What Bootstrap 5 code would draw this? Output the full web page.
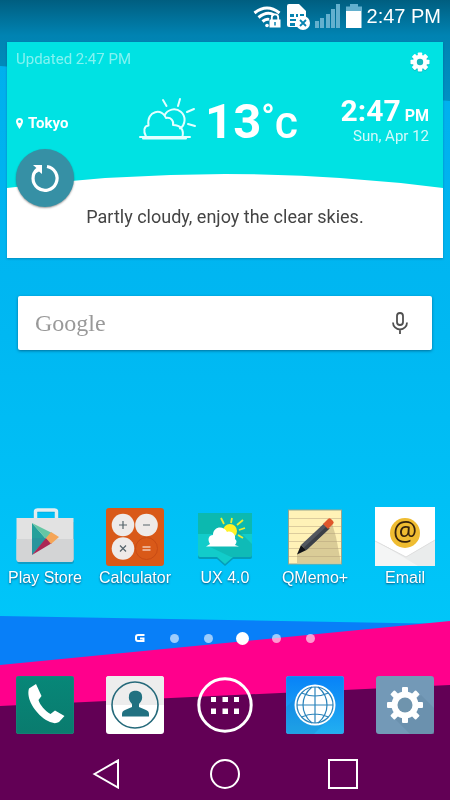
<!DOCTYPE html>
<html lang="en">
<head>
<meta charset="utf-8">
<meta name="viewport" content="width=device-width, initial-scale=1">
<title>Home screen</title>
<link href="https://cdn.jsdelivr.net/npm/bootstrap@5.3.0/dist/css/bootstrap.min.css" rel="stylesheet">
<style>
body{font-family:"Liberation Sans",Arial,sans-serif;color:#fff;background:#00b6f2}
svg{display:block;flex:none}
button{color:inherit;background:none;border:0;padding:0}
.wallpaper{position:fixed;inset:0;width:100%;height:100%;z-index:-1}
.statusbar{height:32px;padding:0 9px;gap:5px;font-size:20px;line-height:32px}
.weather{margin:10px 7px 0;font-family:Roboto,sans-serif;background:#fff;color:#fff;box-shadow:0 1px 2px rgba(0,60,90,.35)}
.weather-sky{background:#00e2e3}
.weather-head{padding:8px 13px 0 9px;height:42px;font-size:15px;line-height:18px;color:#83f2f1}
.weather-now{padding:0 14px 0 9px;height:72px}
.side{flex:1 1 0;min-width:0}
.city{font-size:15px;line-height:16px;font-weight:700;gap:5px;padding-top:6px}
.temp{font-size:49px;line-height:56px;font-weight:700}
.temp-deg,.temp-unit{font-size:35px;line-height:1}
.temp-deg{vertical-align:9px}
.clock{font-size:30px;line-height:32px;font-weight:700}
.clock-half{font-size:16px;line-height:1}
.today{font-size:15px;line-height:18px;color:#d3fafa}
.weather-text{height:70px;padding-top:16px;font-size:18px;line-height:26px;color:#444}
.refresh{position:absolute;left:9px;top:107px;width:58px;height:58px;border-radius:50%;background:#3690a5;box-shadow:0 1px 2px rgba(0,0,0,.4)}
.search{margin:38px 18px 0;height:54px;padding:0 19px 0 17px;background:#fff;border-radius:2px;box-shadow:0 1px 3px rgba(0,50,80,.55)}
.search input{border:0;outline:0;background:none;font-family:"Liberation Serif",serif;font-size:24px;color:#555}
.search input::placeholder{color:#999;opacity:1}
.apps{padding-top:24px;margin-bottom:40px}
.app{width:100%;font-size:16px;line-height:24px;text-shadow:0 1px 2px rgba(0,50,90,.8)}
.pages{height:16px;margin-bottom:30px}
.page-dot{width:34px;height:16px;display:flex;align-items:center;justify-content:center}
.page-dot i{width:9px;height:9px;border-radius:50%;background:rgba(255,255,255,.6)}
.page-dot.current i{width:13px;height:13px;background:#fff}
.dock{margin-bottom:14px}
.navkeys{height:52px;gap:88px}
</style>
<script src="https://cdn.jsdelivr.net/npm/bootstrap@5.3.0/dist/js/bootstrap.bundle.min.js"></script>
</head>
<body>
<svg class="wallpaper" viewBox="0 0 450 800" preserveAspectRatio="none" aria-hidden="true">
<defs>
<linearGradient id="sky" x2="0" y2="1"><stop offset="0" stop-color="#00adec"/><stop offset=".42" stop-color="#00b8f2"/><stop offset=".78" stop-color="#00c6f9"/></linearGradient>
<linearGradient id="shade" x2="0" y2="1"><stop offset="0" stop-color="#005e80"/><stop offset=".35" stop-color="#0083b2"/><stop offset="1" stop-color="#008fc4"/></linearGradient>
</defs>
<path fill="url(#sky)" d="M0 0H450V800H0z"/><path fill="url(#shade)" d="M0 0H450V101L0 66z"/>
<path fill="#087ff8" d="M0 616L450 624V800H0z"/><path fill="#ff008c" d="M0 665L450 621V800H0z"/><path fill="#620055" d="M0 706L450 685V800H0z"/>
</svg>
<div class="d-flex flex-column min-vh-100">
<header class="statusbar d-flex justify-content-end align-items-center">
<svg width="28" height="28" viewBox="0 0 28 28" fill="none" stroke="#fff" role="img" aria-label="Secured Wi-Fi"><path stroke-width="3" d="M1.5 11Q14 1 26.5 11M5.5 15.5Q14 8.500 21 13M9.500 19.500Q13 16.500 16 17.500"/><circle cx="14" cy="23.500" r="1.800" fill="#fff" stroke="none"/><rect x="16.500" y="17.500" width="11" height="8" fill="#fff" stroke="none"/><path stroke-width="1.800" d="M18.800 18v-2.500a3.200 3.200 0 0 1 6.400 0V18"/><path stroke="#0783b1" stroke-width="1.500" d="M22 20v3.500"/></svg>
<svg width="24" height="28" viewBox="0 0 24 28" role="img" aria-label="No SIM"><path fill="#fff" d="M1 4q0-2 2-2h10l7 7v16H3q-2 0-2-2z"/><path fill="#0783b1" d="M4 12h4v3H4zM10 12h2v3h-2zM14 12h4v2h-4zM4 17h6v2H4zM4 21h5v3H4z"/><circle cx="17" cy="21" r="7" fill="#fff"/><path stroke="#0783b1" stroke-width="1.800" d="M14 18l6 6M20 18l-6 6"/></svg>
<svg width="26" height="28" viewBox="0 0 26 28" fill="#63b0ce" role="img" aria-label="No signal"><path d="M0 19h4v7H0zM5 16h4v10H5zM11 12h4v14h-4zM16 7h4v19h-4zM21 2h4v24h-4z"/></svg>
<svg width="16" height="28" viewBox="0 0 16 28" role="img" aria-label="Battery"><path fill="#63b0ce" d="M4 2h8v2.500h4V9H0V4.500h4z"/><path fill="#fff" d="M0 9h15.500v17H0z"/></svg>
<time>2:47 PM</time>
</header>
<main class="flex-grow-1 d-flex flex-column">
<section class="weather position-relative">
<div class="weather-sky">
<div class="weather-head d-flex justify-content-between"><span>Updated 2:47 PM</span>
<button aria-label="Weather settings" class="align-self-start"><svg width="20" height="24" viewBox="-10 -12 20 24"><defs><g id="teeth"><rect id="tooth" x="-2.200" y="-9.500" width="4.400" height="19" rx=".8"/><use href="#tooth" transform="rotate(45)"/><use href="#tooth" transform="rotate(90)"/><use href="#tooth" transform="rotate(135)"/></g></defs><g fill="#2797a3" opacity=".5" transform="translate(0 1)"><use href="#teeth"/><circle r="7"/></g><g fill="#fff"><use href="#teeth"/><circle r="7.200"/></g><circle r="3.200" fill="#16b8bd"/></svg></button></div>
<div class="weather-now d-flex align-items-center">
<div class="side city d-flex align-items-center"><svg width="7" height="11" viewBox="0 0 7 11"><path fill="#fff" fill-rule="evenodd" d="M3.500 0A3.500 3.500 0 0 0 0 3.500C0 6 3.500 11 3.500 11S7 6 7 3.500A3.500 3.500 0 0 0 3.500 0zm0 2a1.500 1.500 0 1 1 0 3 1.500 1.500 0 0 1 0-3z"/></svg>Tokyo</div>
<div class="d-flex align-items-center pe-2"><svg width="66" height="50" viewBox="0 0 66 50" fill="none" stroke="#e4ffff" stroke-width="2" stroke-linecap="round" stroke-linejoin="round" role="img" aria-label="Partly cloudy"><path d="M1 42h50M4 43.500h43"/><path d="M7 41.500C4 36 5 31 9.500 30.500C7 15 24 13 27 23C32 22 35 26 34 30C42 30 45 35 43.500 41.500"/><path d="M25.500 20.500A10.500 10.500 0 1 1 41 33.500"/><path d="M24 5l3.500 6M41 4l-2 7M48 17l7-3M49 29l7 2"/></svg><div class="temp pt-1">13<span class="temp-deg">°</span><span class="temp-unit">C</span></div></div>
<div class="side text-end"><div class="clock">2:47<span class="clock-half"> PM</span></div><div class="today">Sun, Apr 12</div></div>
</div>
<svg class="w-100" height="32" viewBox="0 0 436 32" preserveAspectRatio="none"><path fill="#fff" d="M0 32Q218 4 436 32z"/></svg>
</div>
<p class="weather-text text-center mb-0">Partly cloudy, enjoy the clear skies.</p>
<button class="refresh d-flex align-items-center justify-content-center" aria-label="Refresh"><svg width="32" height="32" viewBox="0 0 32 32" fill="none" stroke="#fff" stroke-width="3.200"><path d="M18 4.500A12 12 0 1 1 8.500 7"/><path fill="#fff" stroke="none" d="M4 3h9v9l-3-2.500L5.500 12 8 6.500z"/></svg></button>
</section>
<form class="search d-flex align-items-center" onsubmit="return false">
<input class="flex-grow-1 p-0" type="search" placeholder="Google" aria-label="Google search">
<button type="button" aria-label="Voice search"><svg width="26" height="26" viewBox="0 0 26 26" fill="none" stroke="#505050" stroke-width="1.800"><rect x="10" y="3" width="6" height="12" rx="3"/><path d="M6 12.500a7 7 0 0 0 14 0M13 19.500V24"/></svg></button>
</form>
<nav class="apps row g-0 mt-auto" aria-label="Apps">
<div class="col"><button class="app d-flex flex-column align-items-center text-nowrap"><svg width="60" height="60" viewBox="0 0 60 60"><path fill="none" stroke="#087eaa" opacity=".35" stroke-width="3" d="M20 14V7l3-2h16l3 2v7"/><path fill="none" stroke="#e2edf0" stroke-width="3.500" d="M20.500 13V6q0-2 2-2h17q2 0 2 2v7"/><path fill="#1686a7" opacity=".6" d="M2 16h57v39q0 3-3 3H5q-3 0-3-3z"/><path fill="#e2e2e2" d="M1.500 12h57v41q0 3-3 3h-51q-3 0-3-3z"/><path fill="#d3d4d5" d="M1.500 33h57v20q0 3-3 3h-51q-3 0-3-3z"/><path fill="#25a09b" d="M17 17L31 33L17 49z"/><path fill="#65c6a4" d="M17 17L37 27L31 33z"/><path fill="#ac2756" d="M17 49L37 37L31 32z"/><path fill="#f5a557" d="M31 32L36 26L44 31L36 38z"/><path fill="#3573a5" d="M17 32L31 32L17 49z" opacity=".25"/></svg>Play Store</button></div>
<div class="col"><button class="app d-flex flex-column align-items-center text-nowrap"><svg width="60" height="60" viewBox="0 0 60 60"><rect x="1" y="2" width="58" height="58" rx="3" fill="#d95918"/><circle cx="18" cy="19" r="11.300" fill="#eeeae8"/><circle cx="41.500" cy="19" r="11.300" fill="#eeeae8"/><circle cx="18" cy="42.500" r="11.300" fill="#eeeae8"/><circle cx="41.500" cy="42.500" r="11" fill="none" stroke="#c84b14"/><path stroke="#56646a" stroke-width="1.200" d="M14 19h8M18 15v8M38 19h7M15 39.500l6 6M21 39.500l-6 6"/><path stroke="#fff" stroke-width="1.200" d="M37.500 41h8M37.500 44h8"/></svg>Calculator</button></div>
<div class="col"><button class="app d-flex flex-column align-items-center text-nowrap"><svg width="60" height="60" viewBox="0 0 60 60"><path fill="#078d9e" opacity=".7" d="M3 8h54v43q0 2-2 2H38l-8 7-8-7H5q-2 0-2-2z"/><path fill="#0cb9af" d="M3 7h54v22H3z"/><path fill="#12ccca" d="M3 28h54v21q0 2-2 2H38l-8 7-8-7H5q-2 0-2-2z"/><path fill="#0c9a95" opacity=".35" d="M40 21L57 38V49q0 2-2 2H36L13 40z"/><circle cx="35" cy="25" r="7" fill="#fff226"/><path stroke="#e9ed35" stroke-width="1.800" d="M26 12l3 6M37 12l-1 5M42 19l6-5M44 24l6-2M43 29l5 3"/><path fill="#fff" d="M11 40.500l4-2.500C12 33 14 29 18 29C18 20 29 19 32 26C37 24 41 29 40 33Q43 35 40 39l4 1.500z"/></svg>UX 4.0</button></div>
<div class="col"><button class="app d-flex flex-column align-items-center text-nowrap"><svg width="60" height="60" viewBox="0 0 60 60"><rect x="3.500" y="4" width="53" height="54" fill="#fff2b7" stroke="#98a58d"/><path stroke="#dccc9d" d="M4 12.500h52M4 20.500h52M4 27.500h52M4 35.500h52M4 42.500h52M4 50.500h52"/><path fill="#ac9e70" opacity=".45" d="M12 48L47 17L51 31L56 57H12z"/><path fill="#111318" d="M12 48.500l4-9.500 5.500 5z"/><path fill="#51565f" d="M16 39L39 17.500l5.500 5L21.500 44z"/><path fill="#3a3f47" d="M19 41.500L42 20l2.500 2.500L21.500 44z"/><path fill="#df572c" d="M38 18l5-5q1.500-1.500 3 0l2 2q1.500 1.500 0 3l-5 5z"/></svg>QMemo+</button></div>
<div class="col"><button class="app d-flex flex-column align-items-center text-nowrap"><svg width="60" height="60" viewBox="0 0 60 60"><path fill="#fff" d="M0 1h60v59H0z"/><path fill="#d8d9da" d="M1 35L31 51L60 34V60H43z"/><path fill="#f0f1f2" d="M0 35L31 51L60 34V60H0z" opacity=".75"/><path fill="none" stroke="#dedede" d="M0 35L31 51L60 34"/><circle cx="30" cy="27" r="15" fill="#efbc31"/><text x="30" y="35" text-anchor="middle" font-family="Open Sans" font-size="27" fill="#35220c" style="text-shadow:none">@</text></svg>Email</button></div>
</nav>
<div class="pages d-flex justify-content-center align-items-center" role="group" aria-label="Home pages">
<button class="page-dot" aria-label="G page"><svg width="10" height="10" viewBox="0 0 10 10" fill="none" stroke="#fff" stroke-width="2"><path d="M9.500 2H3Q1 2 1 4V6Q1 8 3 8H8.500V5.500H5"/></svg></button>
<button class="page-dot" aria-label="Page 1"><i></i></button><button class="page-dot" aria-label="Page 2"><i></i></button><button class="page-dot current" aria-label="Page 3" aria-current="true"><i></i></button><button class="page-dot" aria-label="Page 4"><i></i></button><button class="page-dot" aria-label="Page 5"><i></i></button>
</div>
</main>
<nav class="dock row g-0" aria-label="Dock">
<div class="col d-flex justify-content-center"><button aria-label="Phone"><svg width="58" height="58" viewBox="0 0 58 58"><defs><linearGradient id="green" x2="0" y2="1"><stop stop-color="#078778"/><stop offset="1" stop-color="#0a7b6e"/></linearGradient></defs><rect width="58" height="58" rx="3" fill="url(#green)" stroke="#2c8b80" stroke-width=".6"/><path fill="#fff" d="M20 8L13 12.500C10 22 18 36 30 44Q38 49 43 46L48.500 40L39 34.500L34.500 38C29 35 24 29 22.500 24L25.500 20z"/></svg></button></div>
<div class="col d-flex justify-content-center"><button aria-label="Contacts"><svg width="58" height="58" viewBox="0 0 58 58"><rect width="58" height="58" rx="3" fill="#fff"/><path fill="#ededed" d="M3 0h52q3 0 3 3v26H0V3q0-3 3-3z"/><circle cx="29" cy="29" r="23" fill="none" stroke="#24697a" stroke-width="1.600"/><path fill="#217181" d="M16 40.500V38q0-3 3-4l7-3v-3c-3-3-3.500-6-3-8 0-7 13-7 13 0 .5 2 0 5-3 8v3l7 3q3 1 3 4v2.500z"/></svg></button></div>
<div class="col d-flex justify-content-center"><button aria-label="All apps"><svg width="58" height="58" viewBox="0 0 58 58"><circle cx="29" cy="29" r="26.200" fill="none" stroke="#fff" stroke-width="3"/><path fill="#fff" d="M15 21h5v5h-5zM26.500 21h5.500v5h-5.500zM38 21h5v5h-5zM15 32.500h5v5.500h-5zM26.500 32.500h5.500v5.500h-5.500zM38 32.500h5v5.500h-5z"/></svg></button></div>
<div class="col d-flex justify-content-center"><button aria-label="Browser"><svg width="58" height="58" viewBox="0 0 58 58"><defs><linearGradient id="blue" x2="0" y2="1"><stop stop-color="#0782f8"/><stop offset="1" stop-color="#22aff0"/></linearGradient></defs><rect width="58" height="58" rx="3" fill="url(#blue)" stroke="#45a0ea" stroke-width=".6"/><path fill="#126db8" opacity=".2" d="M43 43L28 58H3L0 55V31L14 18z"/><circle cx="29" cy="29" r="20.500" fill="#fff"/><g fill="none" stroke="#2a83bb" stroke-width="1.200"><circle cx="29" cy="29" r="18"/><path d="M29 11v36M11 29h36M26 11C14 21 14 37 26 47M32 11C44 21 44 37 32 47M15.500 17Q29 23 42.500 17M15.500 41Q29 35 42.500 41"/></g></svg></button></div>
<div class="col d-flex justify-content-center"><button aria-label="Settings"><svg width="58" height="58" viewBox="-29 -29 58 58"><rect x="-29" y="-29" width="58" height="58" rx="3" fill="#7399b7"/><path fill="#638aa5" opacity=".5" d="M16-10L29 3V29H5L-10 14z"/><g fill="#fff"><circle r="13.500"/><g id="cog"><rect id="cogtooth" x="-3" y="-18" width="6" height="36" rx="1"/><use href="#cogtooth" transform="rotate(45)"/><use href="#cogtooth" transform="rotate(90)"/><use href="#cogtooth" transform="rotate(135)"/></g></g><circle r="7.500" fill="#6f94ad"/></svg></button></div>
</nav>
<footer class="navkeys d-flex justify-content-center align-items-center">
<button aria-label="Back"><svg width="30" height="30" viewBox="0 0 30 30" fill="none" stroke="#fff" stroke-width="2"><path d="M2.500 15L26 1.500V28.500z"/></svg></button>
<button aria-label="Home"><svg width="30" height="30" viewBox="0 0 30 30" fill="none" stroke="#fff" stroke-width="2"><circle cx="15" cy="15" r="14"/></svg></button>
<button aria-label="Recent apps"><svg width="30" height="30" viewBox="0 0 30 30" fill="none" stroke="#fff" stroke-width="2"><path d="M1 1h28v28H1z"/></svg></button>
</footer>
</div>
</body>
</html>
